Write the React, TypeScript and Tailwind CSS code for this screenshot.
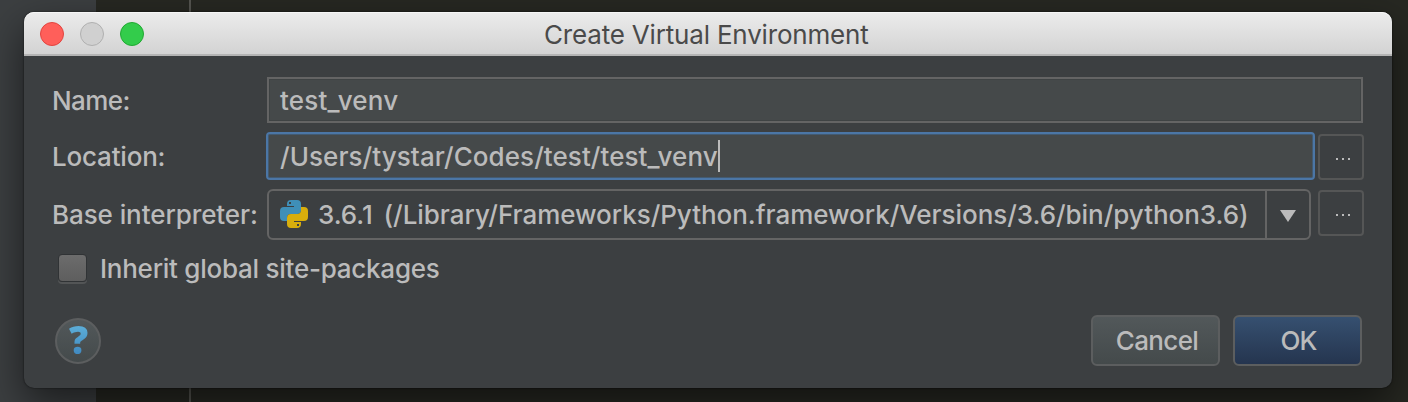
import React from "react";

function PythonIcon() {
  return (
    <svg width="28" height="28" viewBox="0 0 28 28" className="mb-[2px] shrink-0">
      <path
        fill="#3f8fb8"
        fillRule="evenodd"
        d="M7 4Q7 0 11 0H17Q21 0 21 4V10Q21 14 17 14H11Q7 14 7 18V21H4Q0 21 0 17V11Q0 7 4 7H14V6H7ZM9 2V4H11V2Z"
      />
      <path
        fill="#d8ae0c"
        fillRule="evenodd"
        d="M21 24Q21 28 17 28H11Q7 28 7 24V18Q7 14 11 14H17Q21 14 21 10V7H24Q28 7 28 11V17Q28 21 24 21H14V22H21ZM19 26V24H17V26Z"
      />
    </svg>
  );
}

function BrowseButton() {
  return (
    <button className="flex h-[46px] w-[46px] shrink-0 items-center justify-center rounded-[4px] border-2 border-[#555656] pt-1">
      <svg width="14" height="2" viewBox="0 0 14 2" fill="#bbbbbb" className="ml-[4px]">
        <path d="M0 0h2v2H0zM6 0h2v2H6zM12 0h2v2h-2z" />
      </svg>
    </button>
  );
}

export default function App() {
  return (
    <div className="flex h-[402px] w-[1408px] overflow-hidden bg-[linear-gradient(90deg,#3c3f41_0_96px,#272822_96px_189px,#555550_189px_191px,#272822_191px)] px-6 pt-3 font-['Inter',sans-serif] text-[26px] leading-8 font-[450] text-[#bbbbbb]">
      <div className="flex h-[376px] w-[1368px] shrink-0 flex-col rounded-[10px] bg-[#3c3f41] shadow-[0_0_2px_rgba(0,0,0,0.7),0_16px_40px_rgba(0,0,0,0.55)]">
        <header className="flex h-11 shrink-0 items-center rounded-t-[10px] border-b-2 border-[#b4b4b4] bg-linear-to-b from-[#ececec] to-[#d3d3d3] pl-4 shadow-[inset_0_1px_0_#f6f6f6]">
          <div className="flex w-[504px] shrink-0 gap-4 pt-[2px]">
            <span className="h-6 w-6 rounded-full border border-[#e2443f] bg-[#ff5f5a]" />
            <span className="h-6 w-6 rounded-full border border-[#b0b0b0] bg-[#d0d0d0]" />
            <span className="h-6 w-6 rounded-full border border-[#21a932] bg-[#33cc4b]" />
          </div>
          <h1 className="whitespace-nowrap pt-1 font-normal tracking-[-0.18px] text-[#4a4a4a]">Create Virtual Environment</h1>
        </header>

        <div className="flex flex-col pt-[21px] pr-7 pl-7">
          <div className="flex h-[46px] w-[1311px] items-center">
            <label className="w-[215px] shrink-0 whitespace-nowrap pt-[2px] tracking-[-0.6px]">Name:</label>
            <div className="flex h-[46px] flex-1 items-center border-2 border-[#646464] bg-[#45494a] pt-[2px] pl-[11px] tracking-[0.2px] shadow-[inset_0_0_0_1px_#3f4344]">
              test_venv
            </div>
          </div>

          <div className="mt-[9px] flex h-12 w-[1312px] items-start">
            <label className="w-[214px] shrink-0 whitespace-nowrap pt-[9px] tracking-[-0.2px]">Location:</label>
            <div className="flex h-12 w-[1049px] shrink-0 items-center rounded-[4px] border-2 border-[#4b76a6] bg-[#45494a] pl-3 shadow-[inset_0_0_0_1px_#435a70]">
              <span className="pt-[2px] tracking-[0.07px]">/Users/tystar/Codes/test/test_venv</span>
              <span className="h-8 w-[2px] bg-[#bbbbbb]" />
            </div>
            <div className="ml-[3px] pt-[2px]">
              <BrowseButton />
            </div>
          </div>

          <div className="mt-[9px] flex h-[51px] w-[1312px]">
            <label className="w-[215px] shrink-0 whitespace-nowrap pt-[10px] tracking-[-0.08px]">Base interpreter:</label>
            <div className="flex h-[51px] w-[1044px] shrink-0 rounded-[6px] border-2 border-[#646464]">
              <div className="flex w-[998px] shrink-0 items-center border-r-2 border-[#646464] pl-[11px]">
                <PythonIcon />
                <span className="ml-[10px] whitespace-nowrap tracking-[-0.04px] [word-spacing:4px]">
                  3.6.1 (/Library/Frameworks/Python.framework/Versions/3.6/bin/python3.6)
                </span>
              </div>
              <div className="flex flex-1 items-center justify-center pt-[3px]">
                <svg width="16" height="12" viewBox="0 0 16 12" fill="#bbbbbb">
                  <path d="M0 0h16L8 12z" />
                </svg>
              </div>
            </div>
            <div className="ml-[7px] pt-px">
              <BrowseButton />
            </div>
          </div>

          <div className="mt-[13px] flex h-8 items-center">
            <span className="mb-[2px] ml-[6px] h-[28px] w-[29px] rounded-[4px] border border-[#303335] bg-linear-to-b from-[#6c6c6c] to-[#5e5e5e] shadow-[0_2px_0_#535556]" />
            <span className="ml-[13px] whitespace-nowrap tracking-[-0.25px]">Inherit global site-packages</span>
          </div>

          <div className="mt-[30px] flex h-[51px] items-center">
            <button className="ml-[3px] flex h-[46px] w-[46px] items-center justify-center rounded-full border-2 border-[#5c5e5f] bg-linear-to-b from-[#52585a] to-[#444a4b]">
              <span className="mb-[3px] ml-px bg-linear-to-b from-[#62b5dd] to-[#3d85bd] bg-clip-text font-['Open_Sans',sans-serif] text-[38px] leading-[38px] font-extrabold text-transparent">
                ?
              </span>
            </button>
            <button className="ml-auto flex h-[51px] w-[129px] items-center justify-center rounded-[6px] border-2 border-[#5c5e5f] bg-linear-to-b from-[#52585a] to-[#444a4b] pl-[3px] tracking-[-0.65px]">
              Cancel
            </button>
            <button className="mr-[2px] ml-[13px] flex h-[51px] w-[129px] items-center justify-center rounded-[6px] border-2 border-[#5c5e5f] bg-linear-to-b from-[#365070] to-[#25354f] pl-[2px] tracking-[-1px]">
              OK
            </button>
          </div>
        </div>
      </div>
    </div>
  );
}
